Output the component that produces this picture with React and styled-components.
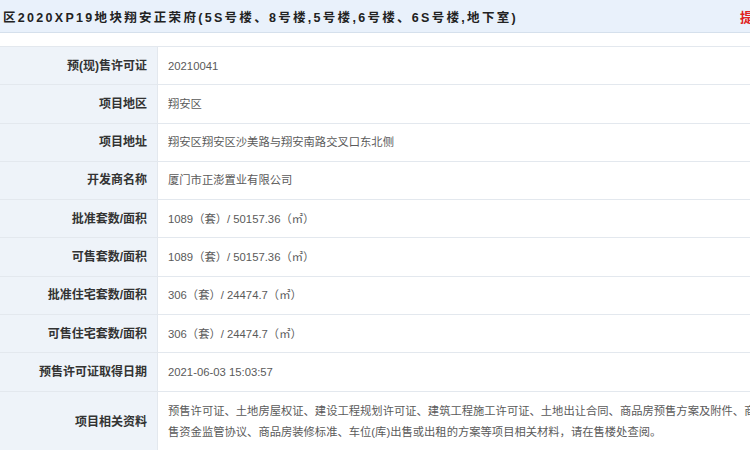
import React from 'react'
import styled, { createGlobalStyle } from 'styled-components'

const Global = createGlobalStyle`
  html, body {
    margin: 0;
    padding: 0;
    background: #fff;
    overflow: hidden;
  }
  body {
    font-family: "Liberation Sans", "Noto Sans CJK SC", sans-serif;
  }
`

const Header = styled.div`
  display: flex;
  align-items: center;
  justify-content: space-between;
  height: 33px;
  padding-left: 3px;
  background: #e9f1fb;
  border-bottom: 1px solid #d5e0ec;
  box-sizing: border-box;
  overflow: hidden;
`

const Title = styled.h1`
  margin: 0;
  font-size: 12.5px;
  font-weight: bold;
  letter-spacing: 2.3px;
  color: #222;
  white-space: nowrap;
`

const RedLink = styled.span`
  font-size: 13px;
  font-weight: bold;
  color: #e02020;
  margin-right: -16px;
  white-space: nowrap;
`

const Table = styled.div`
  margin-top: 13px;
  width: 810px;
  border-top: 1px solid #e3e8ee;
`

const Row = styled.div`
  display: grid;
  grid-template-columns: 158px 1fr;
  border-bottom: 1px solid #e3e8ee;
`

const Label = styled.div`
  display: flex;
  align-items: center;
  justify-content: flex-end;
  padding: 8.5px 10px;
  background: #eef3f9;
  border-right: 1px solid #e3e8ee;
  font-size: 12px;
  font-weight: bold;
  line-height: 20.3px;
  color: #333;
  white-space: nowrap;
`

const Value = styled.div`
  padding: ${p => (p.$multi ? '9px 10px 10px' : '8.5px 10px')};
  font-size: 11.3px;
  line-height: ${p => (p.$multi ? '21px' : '20.3px')};
  color: #5a5a5a;
`

const rows = [
  ['预(现)售许可证', '20210041'],
  ['项目地区', '翔安区'],
  ['项目地址', '翔安区翔安区沙美路与翔安南路交叉口东北侧'],
  ['开发商名称', '厦门市正澎置业有限公司'],
  ['批准套数/面积', '1089（套）/ 50157.36（㎡）'],
  ['可售套数/面积', '1089（套）/ 50157.36（㎡）'],
  ['批准住宅套数/面积', '306（套）/ 24474.7（㎡）'],
  ['可售住宅套数/面积', '306（套）/ 24474.7（㎡）'],
  ['预售许可证取得日期', '2021-06-03 15:03:57'],
]

export default function App() {
  return (
    <>
      <Global />
      <Header>
        <Title>区2020XP19地块翔安正荣府(5S号楼、8号楼,5号楼,6号楼、6S号楼,地下室)</Title>
        <RedLink>提交</RedLink>
      </Header>
      <Table>
        {rows.map(([k, v]) => (
          <Row key={k}>
            <Label>{k}</Label>
            <Value>{v}</Value>
          </Row>
        ))}
        <Row>
          <Label>项目相关资料</Label>
          <Value $multi>
            预售许可证、土地房屋权证、建设工程规划许可证、建筑工程施工许可证、土地出让合同、商品房预售方案及附件、商品房预售资金监管协议、商品房装修标准、车位(库)出售或出租的方案等项目相关材料，请在售楼处查阅。
          </Value>
        </Row>
      </Table>
    </>
  )
}
